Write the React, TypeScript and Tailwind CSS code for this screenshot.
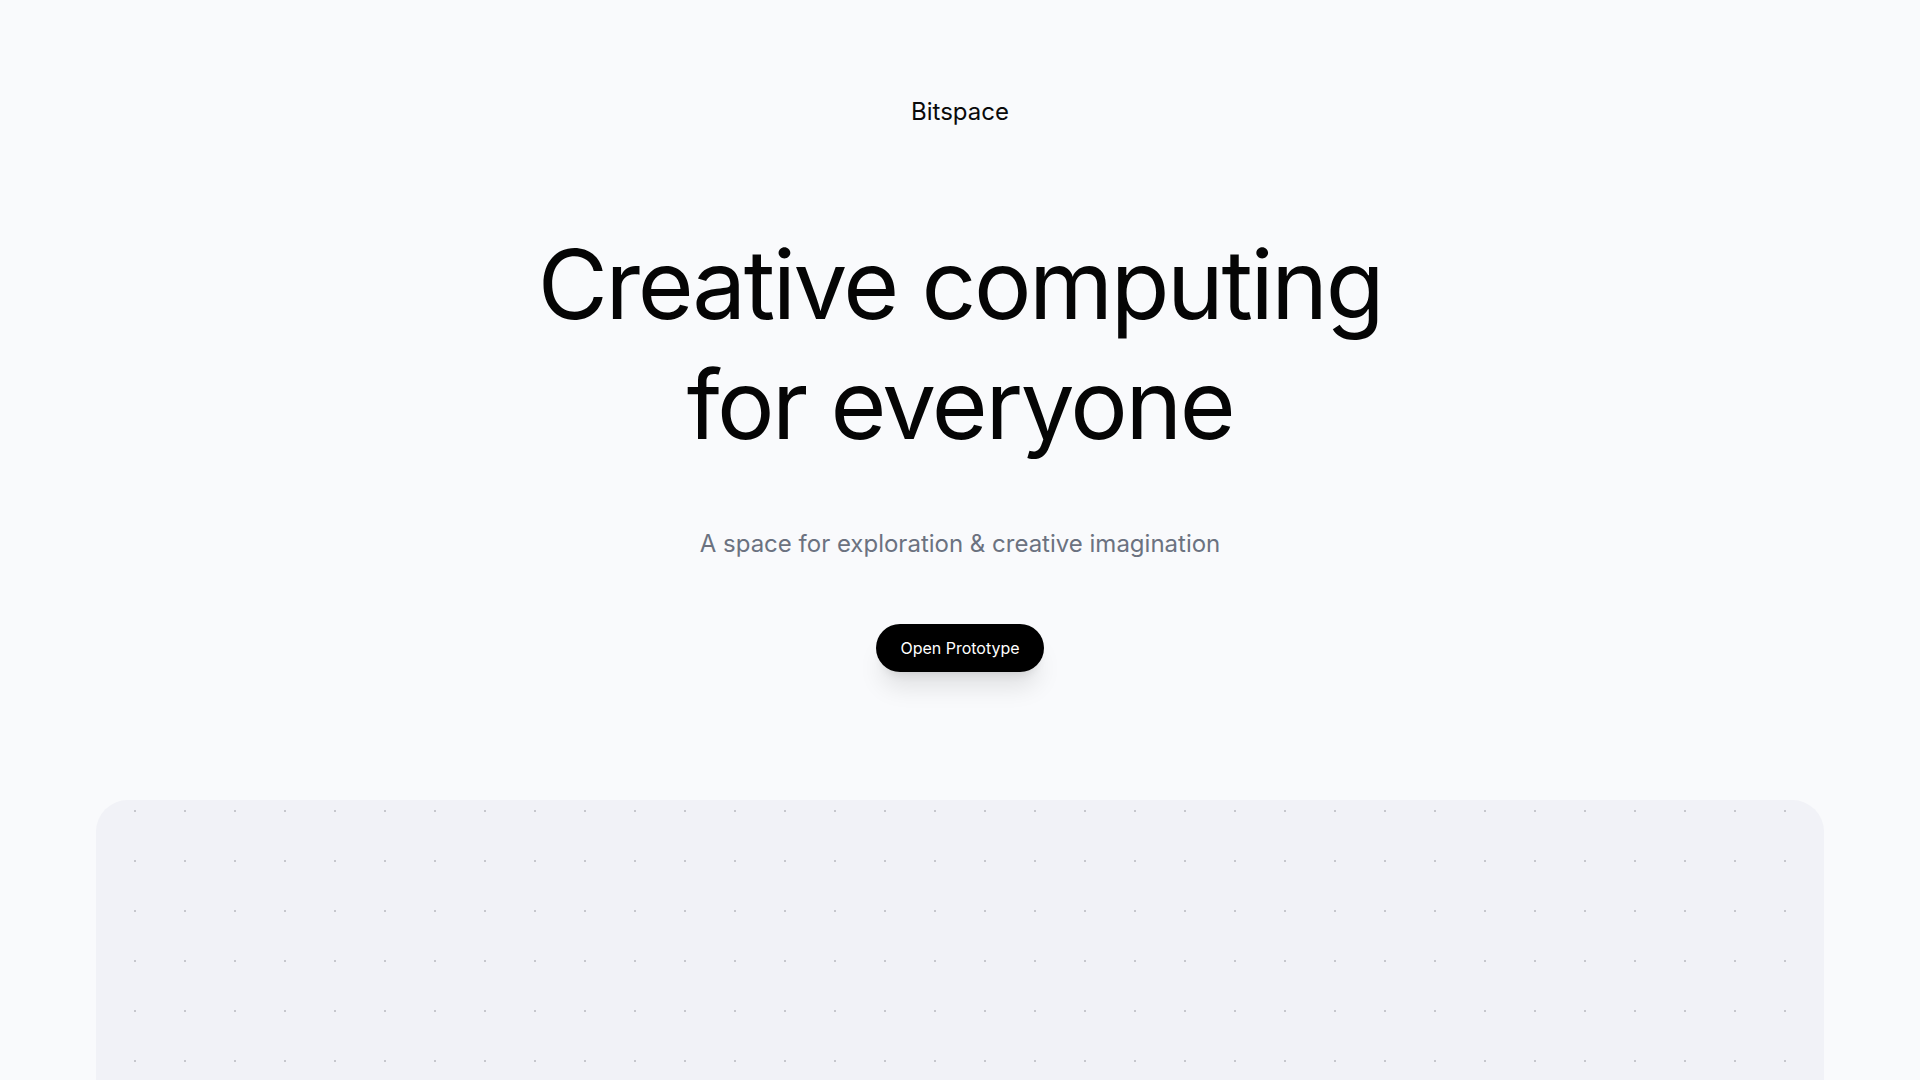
import React from 'react'

function Hero() {
  return (
    <section className="flex flex-col items-center text-center">
      <div className="pt-[96px] text-2xl leading-8 text-[#0a0a0a]">Bitspace</div>

      <h1 className="mt-[96px] text-[96px] leading-[120px] font-normal tracking-tight text-[#050505]">
        Creative computing
        <br />
        for everyone
      </h1>

      <p className="mt-[64px] text-2xl leading-8 text-[#6b7280]">
        A space for exploration &amp; creative imagination
      </p>

      <button className="mt-[64px] h-12 px-6 rounded-full bg-black text-white text-base leading-6 shadow-xl shadow-black/10">
        Open Prototype
      </button>
    </section>
  )
}

function Canvas() {
  return (
    <div className="mx-24 mt-[128px] h-[640px] rounded-t-[32px] bg-[#f1f2f7] bg-[radial-gradient(circle,#c6c7cd_1.1px,transparent_1.3px)] bg-[size:50px_50px] bg-[position:14px_36px]" />
  )
}

export default function App() {
  return (
    <main className="min-h-screen overflow-hidden bg-[#f9fafc] font-['Inter','Noto_Sans',sans-serif]">
      <Hero />
      <Canvas />
    </main>
  )
}
